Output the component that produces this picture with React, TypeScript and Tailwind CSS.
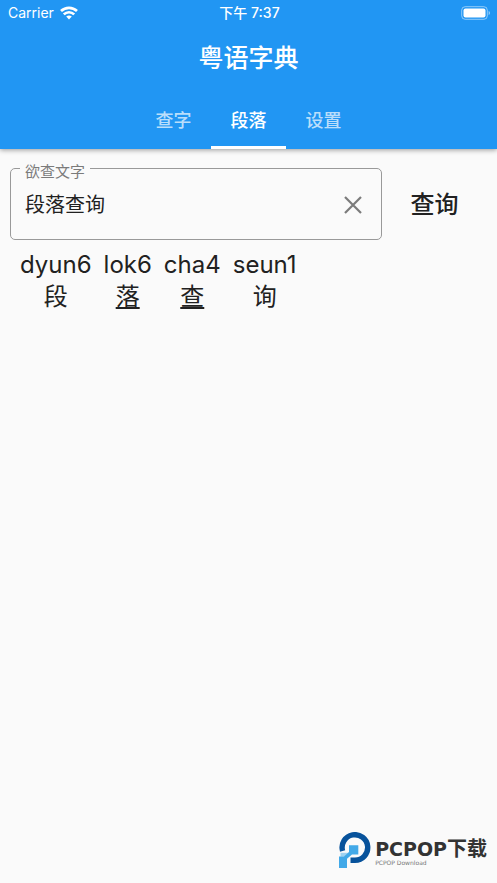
import { useState } from "react";
import { clsx } from "clsx";

const tabs = ["查字", "段落", "设置"];

const results = [
    { jyutping: "dyun6", char: "段", multiple: false },
    { jyutping: "lok6", char: "落", multiple: true },
    { jyutping: "cha4", char: "查", multiple: true },
    { jyutping: "seun1", char: "询", multiple: false },
];

function WifiIcon() {
    return (
        <svg width="18" height="14" viewBox="0 0 18 14" fill="none" stroke="white" strokeWidth="2.7">
            <path d="M1 5C5.5 .7 12.5 .7 17 5" />
            <path d="M3.800 8.400C6.800 5.500 11.200 5.500 14.200 8.400" />
            <path d="M9 13.400L6.200 10.500C7.900 9 10.100 9 11.800 10.500Z" fill="white" stroke="none" />
        </svg>
    );
}

function BatteryIcon() {
    return (
        <svg width="30" height="14" viewBox="0 0 30 14">
            <rect x=".7" y=".7" width="25.600" height="12.600" rx="3.500" fill="none" stroke="white" strokeOpacity=".5" strokeWidth="1" />
            <rect x="2.500" y="2.500" width="22" height="9" rx="2" fill="white" />
            <path d="M27.600 5v4c.9-.3 1.400-1.100 1.400-2s-.5-1.700-1.400-2Z" fill="white" fillOpacity=".5" />
        </svg>
    );
}

function StatusBar() {
    return (
        <div className="grid grid-cols-3 items-center h-[26px] pl-2 pr-[6px] text-[14px] leading-[26px]">
            <div className="flex items-center gap-[6px]">
                <span>Carrier</span>
                <WifiIcon />
            </div>
            <span className="text-center font-medium">下午 7:37</span>
            <div className="flex justify-end">
                <BatteryIcon />
            </div>
        </div>
    );
}

function Watermark() {
    return (
        <div className="flex items-center gap-1 text-[#333333]">
            <svg width="32" height="36" viewBox="0 0 32 36" fill="none">
                <path d="M3.600 19A12.800 12.800 0 1 1 16 28.300H11.500" stroke="#07529b" strokeWidth="5.400" />
                <path d="M10 13.200H19.300V22.400H13L8 26.800V36H0V24.600H5L10 20Z" fill="#42a9e8" />
                <path d="M1.500 20.800H10V24.600H1.500Z" fill="#42a9e8" fillOpacity=".5" />
            </svg>
            <div className="flex flex-col gap-px pt-[6px]">
                <span className="flex items-center h-[18px] font-['DejaVu_Sans','Noto_Sans_CJK_SC',sans-serif] text-[19px] font-bold">
                    PCPOP<span className="text-[20px]">下载</span>
                </span>
                <span className="font-['DejaVu_Sans',sans-serif] text-[6px] leading-[7px] text-[#777777]">PCPOP Download</span>
            </div>
        </div>
    );
}

export default function App() {
    const [tab, setTab] = useState("段落");
    const [text, setText] = useState("段落查询");

    return (
        <div className="flex flex-col min-h-screen bg-[#fafafa] text-[#212121] font-[Inter,'Noto_Sans_CJK_SC',sans-serif]">
            <header className="bg-[#2196f3] text-white shadow-[0_1px_5px_rgba(0,0,0,0.4)]">
                <StatusBar />
                <h1 className="h-16 text-center text-[25px] leading-[64px] font-medium">粤语字典</h1>
                <nav className="flex justify-center" role="tablist">
                    {tabs.map((name) => (
                        <button
                            key={name}
                            role="tab"
                            aria-selected={name === tab}
                            onClick={() => setTab(name)}
                            className={clsx(
                                "w-[75px] h-[59px] border-b-3 pt-1 text-[18px] font-medium",
                                name === tab ? "border-white" : "border-transparent text-white/70"
                            )}
                        >
                            {name}
                        </button>
                    ))}
                </nav>
            </header>

            <main className="flex-1 px-[10px] pt-[6px]">
                <form className="flex" onSubmit={(e) => e.preventDefault()}>
                    <fieldset className="flex-1 min-w-0 h-[85px] px-[9px] border border-[#999999] rounded-[5px]">
                        <legend className="px-[5px] pt-2 text-[15px] leading-[18px] text-[#7b7b7b]">
                            <label htmlFor="query">欲查文字</label>
                        </legend>
                        <div className="flex items-center h-12 pl-[5px] pr-2">
                            <input
                                id="query"
                                value={text}
                                onChange={(e) => setText(e.target.value)}
                                className="flex-1 min-w-0 text-[20px] outline-none"
                            />
                            <button type="button" aria-label="清除" onClick={() => setText("")}>
                                <svg width="22" height="22" viewBox="0 0 22 22" stroke="#7b7b7b" strokeWidth="2.200">
                                    <path d="M3 3L19 19M19 3L3 19" />
                                </svg>
                            </button>
                        </div>
                    </fieldset>
                    <button type="submit" className="w-[105px] pt-[14px] text-[24px] font-medium">
                        查询
                    </button>
                </form>

                <div className="flex gap-3 px-[10px] pt-[9px]">
                    {results.map(({ jyutping, char, multiple }) => (
                        <div key={char} className="flex flex-col items-center text-[24px] leading-[32px]">
                            <span>{jyutping}</span>
                            <span className={clsx(multiple && "underline [text-decoration-skip-ink:none]")}>{char}</span>
                        </div>
                    ))}
                </div>
            </main>

            <footer className="flex justify-end pr-[10px] pb-[15px]">
                <Watermark />
            </footer>
        </div>
    );
}
